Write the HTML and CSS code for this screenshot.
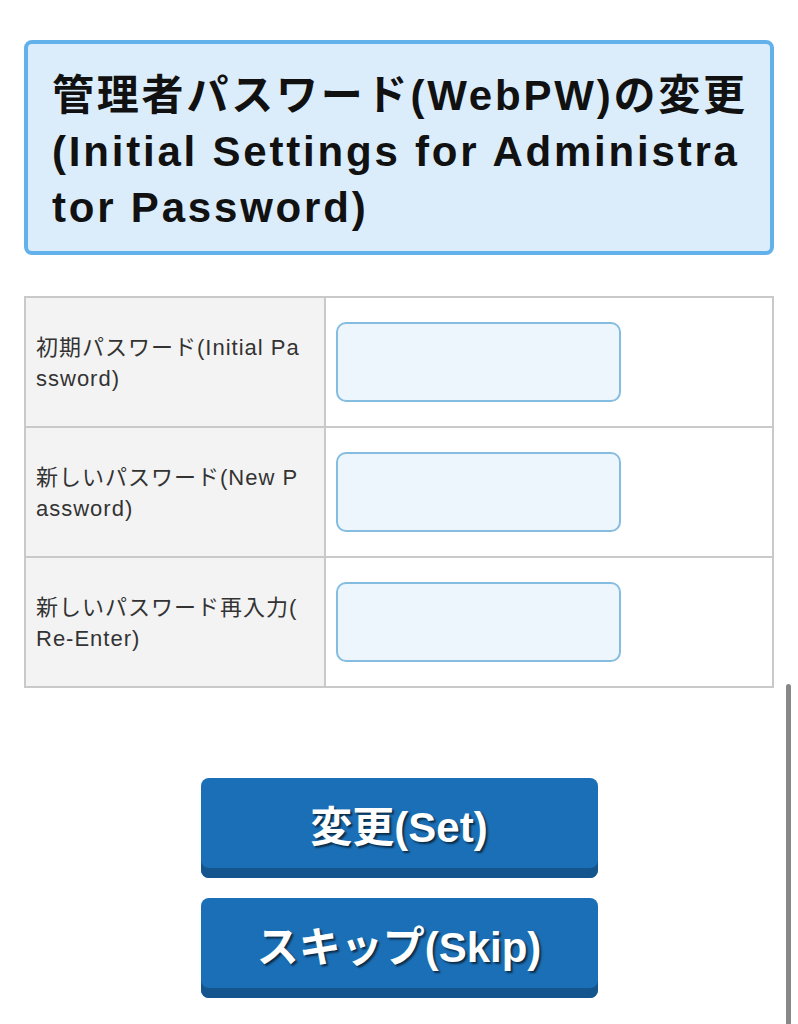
FILE: index.html
```html
<!DOCTYPE html>
<html lang="ja">
<head>
    <meta charset="UTF-8">
    <title>管理者パスワードの変更</title>
    <link rel="stylesheet" href="styles.css">
</head>
<body>
<div class="page">
    <!-- Title -->
    <div class="title-box">
        <h1 class="title">管理者パスワード(WebPW)の変更<br>(Initial Settings for Administrator Password)</h1>
    </div>

    <!-- Password form -->
    <table class="pw-table">
        <tr>
            <td class="label">初期パスワード(Initial Password)</td>
            <td class="field"><input class="pw-input" type="password"></td>
        </tr>
        <tr>
            <td class="label">新しいパスワード(New Password)</td>
            <td class="field"><input class="pw-input" type="password"></td>
        </tr>
        <tr>
            <td class="label">新しいパスワード再入力(Re-Enter)</td>
            <td class="field"><input class="pw-input" type="password"></td>
        </tr>
    </table>

    <!-- Buttons -->
    <div class="actions">
        <button class="btn">変更(Set)</button>
        <button class="btn">スキップ(Skip)</button>
    </div>
</div>

<div class="scroll-indicator"></div>
</body>
</html>
```

FILE: styles.css
```css
body {
    margin: 0;
    background-color: #fff;
    font-family: "Liberation Sans", "Noto Sans CJK JP", sans-serif;
    color: #111;
}

.page {
    padding: 40px 24px 0;
}

/* Title box */
.title-box {
    background-color: #dbedfb;
    border: 4px solid #62b1ea;
    border-radius: 8px;
    padding: 24px 14px 15px 24px;
}

.title {
    margin: 0;
    font-size: 42px;
    line-height: 56px;
    font-weight: bold;
    letter-spacing: 2.8px;
    word-break: break-all;
    line-break: anywhere;
}

/* Form table */
.pw-table {
    width: 100%;
    margin-top: 41px;
    border-collapse: collapse;
    table-layout: fixed;
}

.pw-table td {
    border: 2px solid #c9c9c9;
    height: 126px;
    vertical-align: middle;
}

.label {
    width: 269px;
    padding: 2px 19px 0 10px;
    background-color: #f3f3f3;
    font-size: 22px;
    line-height: 31px;
    letter-spacing: 1px;
    color: #333;
    word-break: break-all;
    line-break: anywhere;
}

.field {
    padding: 0 10px;
    background-color: #fff;
}

.pw-input {
    display: block;
    box-sizing: border-box;
    width: 285px;
    height: 80px;
    border: 2px solid #85bde0;
    border-radius: 10px;
    background-color: #eef6fd;
}

/* Buttons */
.actions {
    display: flex;
    flex-direction: column;
    align-items: center;
    gap: 20px;
    margin-top: 90px;
}

.btn {
    box-sizing: border-box;
    width: 397px;
    height: 100px;
    padding: 0 0 10px;
    border: none;
    border-radius: 8px;
    background-color: #1b6fb6;
    box-shadow: inset 0 -10px 0 #14558e;
    color: #fff;
    font-family: "Liberation Sans", "Noto Sans CJK JP", sans-serif;
    font-size: 42px;
    font-weight: bold;
    text-shadow: 2px 2px 2px rgba(0, 0, 0, 0.6);
}

/* Mobile scroll indicator */
.scroll-indicator {
    position: fixed;
    right: 7px;
    top: 684px;
    bottom: 0;
    width: 5px;
    border-radius: 3px 3px 0 0;
    background-color: #888;
}
```
